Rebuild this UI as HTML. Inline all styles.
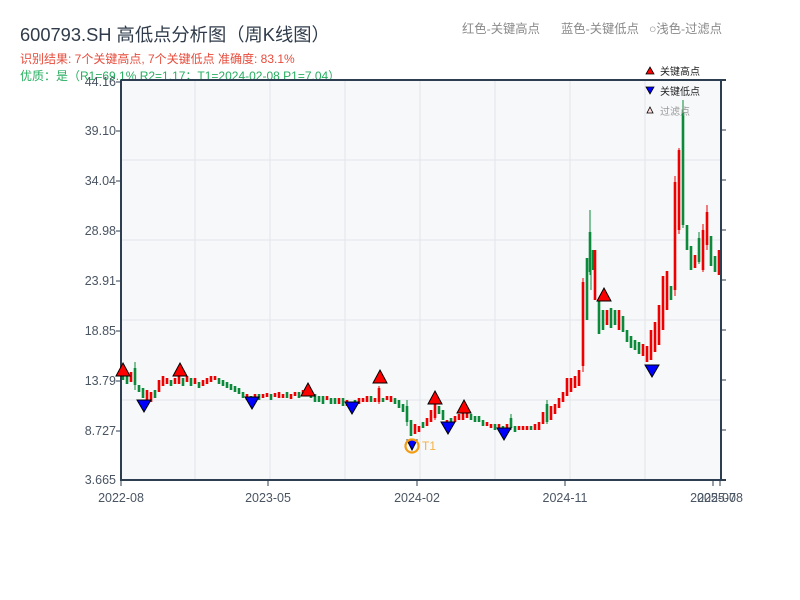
<!DOCTYPE html>
<html><head><meta charset="utf-8"><style>
body{margin:0;width:800px;height:600px;background:#fff;overflow:hidden;font-family:"Liberation Sans","Noto Sans CJK SC",sans-serif}
</style></head><body>
<svg width="800" height="600" xmlns="http://www.w3.org/2000/svg" style="position:absolute;left:0;top:0" font-family="Liberation Sans, Noto Sans CJK SC, sans-serif">
<text x="20" y="41" font-size="18.3" fill="#2f3b4a">600793.SH 高低点分析图（周K线图）</text>
<text x="20" y="63" font-size="12" fill="#e74c3c">识别结果: 7个关键高点, 7个关键低点  准确度: 83.1%</text>
<text x="20" y="80" font-size="12" fill="#27ae60">优质：是（R1=69.1%  R2=1.17；T1=2024-02-08 P1=7.04）</text>
<text x="462" y="33" font-size="12.3" fill="#888">红色-关键高点</text>
<text x="561" y="33" font-size="12.3" fill="#888">蓝色-关键低点</text>
<text x="649" y="33" font-size="12.3" fill="#888">○浅色-过滤点</text>
<rect x="121" y="80" width="600" height="400" fill="#f6f8fa"/>
<g stroke="#e1e5ea" stroke-width="1">
<line x1="195" y1="80" x2="195" y2="480"/><line x1="270" y1="80" x2="270" y2="480"/><line x1="345" y1="80" x2="345" y2="480"/><line x1="420" y1="80" x2="420" y2="480"/><line x1="495" y1="80" x2="495" y2="480"/><line x1="570" y1="80" x2="570" y2="480"/><line x1="645" y1="80" x2="645" y2="480"/>
<line x1="121" y1="160" x2="721" y2="160"/><line x1="121" y1="240" x2="721" y2="240"/><line x1="121" y1="320" x2="721" y2="320"/><line x1="121" y1="400" x2="721" y2="400"/>
</g>
<path stroke="#0a8a3a" stroke-width="2.6" fill="none" d="M123,372V380M127,376V384M135,368V385M139,385V392M143,388V398M155,390V398M171,380V386M183,378V386M191,378V386M199,382V388M219,378V384M223,380V386M227,382V388M231,384V390M235,386V392M239,388V394M243,392V398M251,396V400M259,394V400M271,394V400M287,392V398M299,392V398M311,392V398M315,394V402M319,396V402M323,396V404M331,398V404M335,398V404M343,398V406M355,400V406M371,396V402M383,398V402M395,398V404M399,400V408M403,404V412M407,406V422M411,420V436M423,422V428M439,406V414M443,410V420M451,418V424M471,414V420M475,416V422M479,416V422M483,420V426M495,424V430M503,426V432M511,418V428M515,426V432M531,426V430M547,404V422M587,258V320M590,232V272M593,250V270M599,300V334M603,310V330M611,308V328M615,310V325M623,316V332M627,330V342M631,336V348M635,340V350M639,342V354M671,286V300M683,112V225M687,225V250M691,246V270M699,238V262M711,236V266M715,256V272"/>
<path stroke="#0a8a3a" stroke-width="1" fill="none" d="M135,362V390M407,400V426M511,414V430M547,400V424M590,210V275M683,100V228M699,232V264M591,270V290"/>
<path stroke="#e00" stroke-width="2.6" fill="none" d="M131,372V382M147,390V400M151,392V402M159,380V392M163,376V386M167,378V384M175,378V384M179,372V384M187,376V382M195,378V384M203,380V386M207,378V384M211,376V382M215,376V380M247,394V400M255,394V398M263,394V398M267,393V397M275,393V397M279,392V398M283,394V398M291,394V399M295,392V396M303,390V394M307,388V396M327,396V400M339,398V404M347,400V406M351,402V408M359,398V404M363,398V402M367,396V402M375,398V402M379,388V402M387,396V400M391,396V402M415,424V434M419,426V432M427,418V426M431,410V422M435,402V418M447,420V426M455,416V422M459,414V420M463,410V420M467,412V418M487,422V426M491,424V428M499,424V428M507,424V430M519,426V430M523,426V430M527,426V430M535,424V430M539,422V430M543,412V424M551,406V420M555,404V414M559,398V408M563,392V402M567,378V396M571,378V392M575,376V388M579,370V386M583,282V366M595,250V300M607,310V325M619,310V330M643,344V356M647,346V362M651,330V360M655,322V352M659,305V345M663,276V330M667,271V310M675,182V290M679,150V230M695,255V268M703,230V270M707,212V245M719,250V275"/>
<path stroke="#e00" stroke-width="1" fill="none" d="M583,278V372M675,176V296M679,148V234M703,224V272M707,205V250M435,398V420M379,386V404"/>
<g stroke="#2c3e50" stroke-width="2" fill="none">
<line x1="121" y1="80" x2="121" y2="481"/><line x1="120" y1="480" x2="726" y2="480"/><line x1="721" y1="80" x2="721" y2="481"/><line x1="121" y1="80" x2="726" y2="80"/>
</g>
<g stroke="#2c3e50" stroke-width="1">
<line x1="116" y1="82" x2="121" y2="82"/><line x1="116" y1="131" x2="121" y2="131"/><line x1="116" y1="181" x2="121" y2="181"/><line x1="116" y1="231" x2="121" y2="231"/><line x1="116" y1="281" x2="121" y2="281"/><line x1="116" y1="331" x2="121" y2="331"/><line x1="116" y1="381" x2="121" y2="381"/><line x1="116" y1="431" x2="121" y2="431"/>
<line x1="721" y1="130" x2="726" y2="130"/><line x1="721" y1="180" x2="726" y2="180"/><line x1="721" y1="230" x2="726" y2="230"/><line x1="721" y1="280" x2="726" y2="280"/><line x1="721" y1="330" x2="726" y2="330"/><line x1="721" y1="380" x2="726" y2="380"/><line x1="721" y1="430" x2="726" y2="430"/>
<line x1="121" y1="480" x2="121" y2="486"/><line x1="268" y1="480" x2="268" y2="486"/><line x1="417" y1="480" x2="417" y2="486"/><line x1="565" y1="480" x2="565" y2="486"/><line x1="713" y1="480" x2="713" y2="486"/><line x1="720" y1="480" x2="720" y2="486"/>
</g>
<g font-size="12.5" fill="#4a5563" text-anchor="end">
<text x="116" y="86">44.16</text><text x="116" y="135">39.10</text><text x="116" y="185">34.04</text><text x="116" y="235">28.98</text><text x="116" y="285">23.91</text><text x="116" y="335">18.85</text><text x="116" y="385">13.79</text><text x="116" y="435">8.727</text><text x="116" y="484">3.665</text>
</g>
<g font-size="12.5" fill="#4a5563" text-anchor="middle">
<text x="121" y="502">2022-08</text><text x="268" y="502">2023-05</text><text x="417" y="502">2024-02</text><text x="565" y="502">2024-11</text><text x="713" y="502">2025-07</text><text x="720" y="502">2025-08</text>
</g>
<g fill="#ff0000" stroke="#000" stroke-width="1">
<path d="M123,363 L130,376 L116,376Z"/><path d="M180,363 L187,376 L173,376Z"/><path d="M308,383 L315,396 L301,396Z"/><path d="M380,370 L387,383 L373,383Z"/><path d="M435,391 L442,404 L428,404Z"/><path d="M464,400 L471,413 L457,413Z"/><path d="M604,288 L611,301 L597,301Z"/>
</g>
<g fill="#0000ff" stroke="#000" stroke-width="1">
<path d="M137,400 L151,400 L144,412Z"/><path d="M245,397 L259,397 L252,409Z"/><path d="M345,402 L359,402 L352,414Z"/><path d="M441,422 L455,422 L448,434Z"/><path d="M497,428 L511,428 L504,440Z"/><path d="M645,365 L659,365 L652,377Z"/><path d="M407,440 L417,440 L412,450Z"/>
</g>
<circle cx="412" cy="446" r="6.5" fill="none" stroke="#f39c12" stroke-width="2.2"/>
<text x="422" y="450" font-size="12" fill="#f5b041">T1</text>
<path d="M650,67 L654,74 L646,74Z" fill="#f00" stroke="#000" stroke-width="0.8"/>
<text x="660" y="75" font-size="10" fill="#222">关键高点</text>
<path d="M646,87 L654,87 L650,94Z" fill="#00f" stroke="#000" stroke-width="0.8"/>
<text x="660" y="95" font-size="10" fill="#222">关键低点</text>
<path d="M650,107 L653,113 L647,113Z" fill="#fdd" stroke="#000" stroke-width="0.8"/>
<text x="660" y="115" font-size="10" fill="#999">过滤点</text>
</svg>
</body></html>
